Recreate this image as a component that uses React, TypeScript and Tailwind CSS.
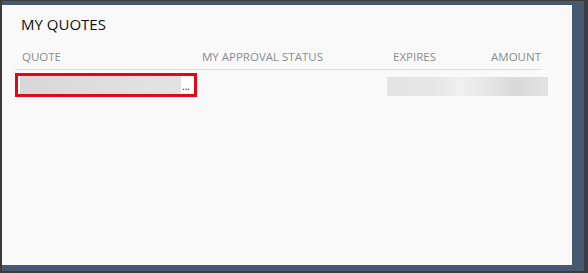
export default function App() {
  return (
    <div className="w-[588px] h-[273px] bg-[#3b3b3b] pt-px pl-[2px] pr-[4px] pb-[2px]" style={{ fontFamily: '"Open Sans", sans-serif' }}>
      <div className="h-full bg-[#475872] pt-[4px] pr-[12px] pb-[6px] flex flex-col">
        <div className="flex-1 bg-[#f9f9f9] pl-[13px] pr-[30px]">
          {/* Title */}
          <h1 className="pl-[6px] pt-[9px] h-[37px] text-[15px] leading-[20px] text-[#111]">MY QUOTES</h1>

          {/* Header */}
          <div className="grid grid-cols-[187px_190px_1fr_auto] items-end h-[28px] pb-[4px] border-b border-[#dedede] text-[11.5px] leading-[16px] text-[#8a8d91]">
            <span className="pl-[7px]">QUOTE</span>
            <span>MY APPROVAL STATUS</span>
            <span className="pl-[1px]">EXPIRES</span>
            <span className="pr-px">AMOUNT</span>
          </div>

          {/* Row */}
          <div className="flex items-start pt-[3px]">
            <div className="shrink-0 w-[182px] h-[24px] border-[3px] border-[#e30613] bg-white flex items-center pl-[2px]">
              <div className="w-[161px] h-[18px] bg-gradient-to-r from-[#d7d7d7] via-[#dedede] to-[#e3e3e3]" />
              <span className="ml-[1px] text-[10px] leading-[10px] text-[#222] self-end pb-[3px]">...</span>
            </div>
            <div className="shrink-0 mt-[4px] ml-[190px] w-[161px] h-[19px] bg-[linear-gradient(90deg,#e3e3e3_0%,#e6e6e6_30%,#f0f0f0_45%,#e4e4e4_65%,#d9d9d9_80%,#e2e2e2_100%)]" />
          </div>
        </div>
      </div>
    </div>
  );
}
